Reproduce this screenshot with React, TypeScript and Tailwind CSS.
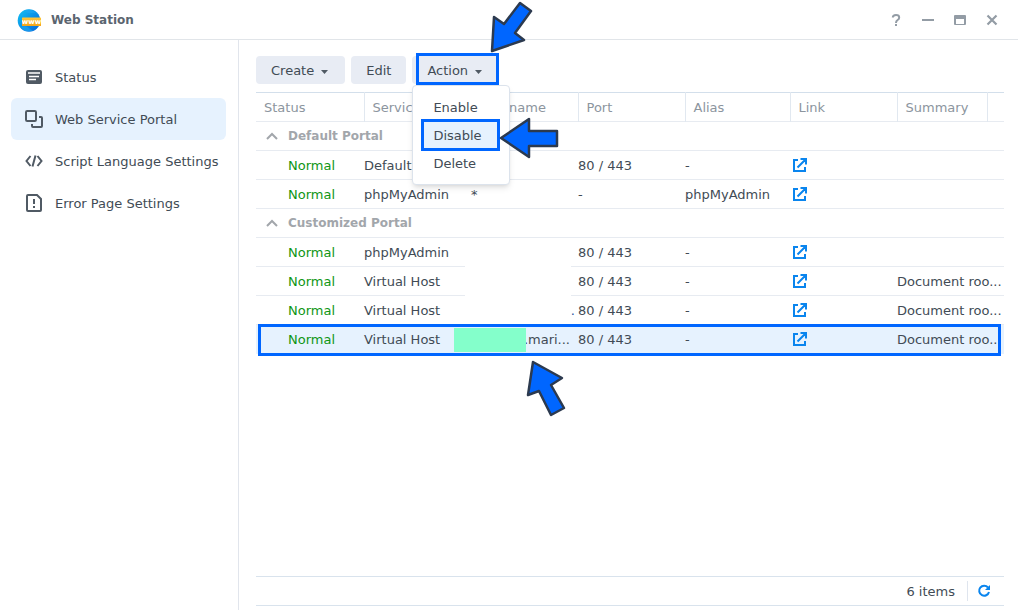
import React from "react";
import clsx from "clsx";

interface Portal {
  service: string;
  hostname?: string;
  port: string;
  alias: string;
  summary?: string;
  selected?: boolean;
}

interface PortalGroup {
  title: string;
  portals: Portal[];
}

const groups: PortalGroup[] = [
  {
    title: "Default Portal",
    portals: [
      { service: "Default", port: "80 / 443", alias: "-" },
      { service: "phpMyAdmin", hostname: "*", port: "-", alias: "phpMyAdmin" }
    ]
  },
  {
    title: "Customized Portal",
    portals: [
      { service: "phpMyAdmin", port: "80 / 443", alias: "-" },
      { service: "Virtual Host", port: "80 / 443", alias: "-", summary: "Document roo..." },
      { service: "Virtual Host", hostname: ".", port: "80 / 443", alias: "-", summary: "Document roo..." },
      { service: "Virtual Host", hostname: ".mari...", port: "80 / 443", alias: "-", summary: "Document roo...", selected: true }
    ]
  }
];

const headers = ["Status", "Service", "Hostname", "Port", "Alias", "Link", "Summary", ""];

function Logo() {
  return (
    <svg width="24" height="24" viewBox="0 0 24 24" className="shrink-0">
      <defs>
        <linearGradient id="globe" x1="0" y1="0" x2="1" y2="1">
          <stop offset="0" stopColor="#12c4f5" />
          <stop offset="1" stopColor="#0560d8" />
        </linearGradient>
        <linearGradient id="ribbon" x1="0" y1="0" x2="0" y2="1">
          <stop offset="0" stopColor="#fdc83c" />
          <stop offset="1" stopColor="#f6a31a" />
        </linearGradient>
      </defs>
      <circle cx="12" cy="12.5" r="11.3" fill="url(#globe)" />
      <path d="M7 2.8Q10 6 14 5T20 6Q16 2 12 1.6Q9 1.6 7 2.8M4 19Q9 17 12 20T17 22Q13 24 9 23Q6 22 4 19" fill="#22a8f4" opacity=".6" />
      <rect x="5" y="9.5" width="19" height="8.5" rx=".6" fill="url(#ribbon)" />
      <text x="14.5" y="16" textAnchor="middle" fontSize="7" fontWeight="bold" fontFamily="DejaVu Sans, sans-serif" fill="#fff">www</text>
    </svg>
  );
}

function StatusIcon() {
  return (
    <svg width="18" height="18" viewBox="0 0 18 18">
      <path d="M3 2h12a2 2 0 0 1 2 2v10a2 2 0 0 1-2 2H3a2 2 0 0 1-2-2V4a2 2 0 0 1 2-2Z" fill="#505a64" />
      <path d="M3 5h12M4 8.5h10M4 11.5h7" stroke="#fff" strokeWidth="1.4" />
    </svg>
  );
}

function PortalIcon() {
  return (
    <svg width="18" height="18" viewBox="0 0 18 18" fill="none" stroke="#505a64" strokeWidth="2">
      <rect x="1" y="1" width="10" height="10" rx="1.2" />
      <path d="M14 7h2q1 0 1 1v8q0 1-1 1H8q-1 0-1-1v-2" />
    </svg>
  );
}

function ScriptIcon() {
  return (
    <svg width="18" height="18" viewBox="0 0 18 18" fill="none" stroke="#505a64" strokeWidth="2">
      <path d="M5.5 4 1.5 9l4 5M12.5 4l4 5-4 5M10.5 3.5l-3 11" />
    </svg>
  );
}

function ErrorIcon() {
  return (
    <svg width="18" height="18" viewBox="0 0 18 18" fill="none" stroke="#505a64" strokeWidth="2">
      <path d="M3 1h9l4 4v11q0 1-1 1H3q-1 0-1-1V2q0-1 1-1Z" />
      <path d="M9 5v5M9 12v2" />
    </svg>
  );
}

function LinkIcon() {
  return (
    <svg width="16" height="16" viewBox="0 0 16 16" fill="none" stroke="#0a85ee" strokeWidth="2">
      <path d="M6 3H2v11h11v-4M5.5 10.5 13 3M8.5 2H14v5.5" />
    </svg>
  );
}

function Caret() {
  return (
    <svg width="7" height="4" viewBox="0 0 7 4" className="mt-px">
      <path d="M0 0h7L3.5 4Z" fill="#505a64" />
    </svg>
  );
}

const navItems = [
  { label: "Status", icon: <StatusIcon /> },
  { label: "Web Service Portal", icon: <PortalIcon />, active: true },
  { label: "Script Language Settings", icon: <ScriptIcon /> },
  { label: "Error Page Settings", icon: <ErrorIcon /> }
];

function TitleBar() {
  return (
    <header className="flex h-10 shrink-0 items-center border-b border-[#e1e5e9] pl-[17px] pr-[18px]">
      <Logo />
      <h1 className="ml-[10px] flex-1 text-xs font-bold text-[#5b656f]">Web Station</h1>
      <div className="flex items-center gap-4 text-[#939ca5]">
        <button type="button" aria-label="Help" className="size-4">
          <svg width="16" height="16" viewBox="0 0 16 16" fill="none" stroke="currentColor" strokeWidth="2">
            <path d="M4.8 5.6Q4.8 3 8 3t3.2 2.4Q11.2 7 9.6 8T8 11M8 12v2" />
          </svg>
        </button>
        <button type="button" aria-label="Minimize" className="size-4">
          <svg width="16" height="16" viewBox="0 0 16 16"><path d="M2 7h12v2H2Z" fill="currentColor" /></svg>
        </button>
        <button type="button" aria-label="Maximize" className="size-4">
          <svg width="16" height="16" viewBox="0 0 16 16">
            <path fillRule="evenodd" d="M3 3h10q1 0 1 1v8q0 1-1 1H3q-1 0-1-1V4q0-1 1-1Zm1 4v5h8V7Z" fill="currentColor" />
          </svg>
        </button>
        <button type="button" aria-label="Close" className="size-4">
          <svg width="16" height="16" viewBox="0 0 16 16"><path d="m3.5 3.5 9 9m0-9-9 9" stroke="currentColor" strokeWidth="2.2" /></svg>
        </button>
      </div>
    </header>
  );
}

function Sidebar() {
  return (
    <nav className="w-[239px] shrink-0 border-r border-[#e1e5ec] pl-[11px] pr-3 pt-4">
      {navItems.map((item) => (
        <a
          key={item.label}
          href="#"
          className={clsx(
            "flex h-[42px] items-center gap-3 whitespace-nowrap rounded-md pl-[14px]",
            item.active && "bg-[#e6f2fe]"
          )}
        >
          {item.icon}
          <span className="pt-0.5">{item.label}</span>
        </a>
      ))}
    </nav>
  );
}

function ActionMenu() {
  return (
    <div className="relative">
      <button type="button" aria-expanded="true" className="flex h-7 items-center gap-[7px] rounded-sm bg-[#e8ecf4] pl-[15px] pr-[17px] pt-0.5">
        Action
        <Caret />
      </button>
      <div className="pointer-events-none absolute -top-[3px] left-1 right-0 h-8 border-[3px] border-[#0066ff]" />
      <div role="menu" className="absolute left-0 top-[29px] z-10 w-[98px] rounded-sm border border-[#dce3ec] bg-white py-[7px] shadow-md">
        <button type="button" role="menuitem" className="block h-7 w-full pl-5 pt-0.5 text-left">Enable</button>
        <div className="relative">
          <button type="button" role="menuitem" className="ml-2 block h-7 w-[79px] bg-[#e6f2fe] pl-3 pt-0.5 text-left">Disable</button>
          <div className="pointer-events-none absolute -inset-y-[2px] left-2 w-[79px] border-[3px] border-[#0066ff]" />
        </div>
        <button type="button" role="menuitem" className="block h-7 w-full pl-5 pt-0.5 text-left">Delete</button>
      </div>
    </div>
  );
}

function PortalRow({ portal }: { portal: Portal }) {
  return (
    <tr className={clsx("relative h-[29px]", portal.selected ? "bg-[#e6f2fe]" : "border-b border-[#e7ebf1]")}>
      <td className="pl-8 pt-0.5 text-[#0f9615]">
        Normal
        {portal.selected && (
          <span className="pointer-events-none absolute -bottom-[2px] left-[2px] right-[3px] -top-px border-[3px] border-[#0066ff]" />
        )}
      </td>
      <td className="pt-0.5">{portal.service}</td>
      <td
        className={clsx(
          "pt-0.5",
          portal.selected && "pr-2 text-right",
          portal.hostname === "." && "pr-[3px] text-right text-[#2a55a0]"
        )}
      >
        {portal.hostname}
        {portal.selected && <span className="absolute left-[198px] top-[3px] h-6 w-[72px] bg-[#84ffcb]" />}
      </td>
      <td className="pt-0.5">{portal.port}</td>
      <td className="pt-0.5">{portal.alias}</td>
      <td>
        <a href="#" aria-label="Open portal" className="ml-0.5 block w-4"><LinkIcon /></a>
      </td>
      <td colSpan={2} className="whitespace-nowrap pt-0.5">{portal.summary}</td>
    </tr>
  );
}

function PortalTable() {
  return (
    <div className="relative">
      <table className="w-full table-fixed border-collapse border-t border-[#d3dfeb] text-left">
        <colgroup>
          <col className="w-[108px]" />
          <col className="w-[107px]" />
          <col className="w-[107px]" />
          <col className="w-[107px]" />
          <col className="w-[105px]" />
          <col className="w-[107px]" />
          <col className="w-[90px]" />
          <col />
        </colgroup>
        <thead>
          <tr className="h-[29px] border-b border-[#e7ebf1] text-[#8c959e]">
            {headers.map((header, i) => (
              <th key={i} scope="col" className={clsx("pl-2 pt-0.5 font-normal", i > 0 && "border-l border-[#e1e8f0]")}>
                {header}
              </th>
            ))}
          </tr>
        </thead>
        {groups.map((group) => (
          <tbody key={group.title}>
            <tr className="h-[29px] border-b border-[#e7ebf1]">
              <th colSpan={8} scope="rowgroup" className="text-[#a2a6ab]">
                <button type="button" className="flex items-center gap-[10px] pl-[10px] text-xs font-bold">
                  <svg width="12" height="8" viewBox="0 0 12 8" fill="none" stroke="currentColor" strokeWidth="2">
                    <path d="m1 7 5-5 5 5" />
                  </svg>
                  {group.title}
                </button>
              </th>
            </tr>
            {group.portals.map((portal, i) => (
              <PortalRow key={i} portal={portal} />
            ))}
          </tbody>
        ))}
      </table>
      {/* blanked-out host names */}
      <div className="absolute left-[209px] top-[147px] h-[84px] w-[106px] bg-white" />
    </div>
  );
}

function Arrow({ points }: { points: string }) {
  return <polygon points={points} fill="#0066ff" stroke="#2c3a4f" strokeWidth="2.5" strokeLinejoin="round" />;
}

export default function App() {
  return (
    <div className="relative flex h-screen flex-col overflow-hidden bg-white font-['DejaVu_Sans',Verdana,sans-serif] text-[13px] leading-5 text-[#414b55]">
      <TitleBar />
      <div className="flex min-h-0 flex-1">
        <Sidebar />
        <main className="flex min-w-0 flex-1 flex-col pb-1 pl-[17px] pr-[14px] pt-4">
          <div className="mb-2 flex gap-[6px]">
            <button type="button" className="flex h-7 items-center gap-[7px] rounded-sm bg-[#e8ecf4] pl-[15px] pr-[17px] pt-0.5">
              Create
              <Caret />
            </button>
            <button type="button" className="h-7 rounded-sm bg-[#e8ecf4] px-[15px] pt-0.5">Edit</button>
            <ActionMenu />
          </div>
          <div className="flex-1">
            <PortalTable />
          </div>
          <footer className="flex h-[30px] items-center justify-end border-y border-[#d9e3ed]">
            <span className="pr-3 pt-0.5">6 items</span>
            <span className="h-5 border-l border-[#dfe5ee]" />
            <button type="button" aria-label="Refresh" className="ml-2 mr-3">
              <svg width="16" height="16" viewBox="0 0 16 16" fill="none" stroke="#0a85ee" strokeWidth="2">
                <path d="M12 4.5A5 5 0 1 0 13 9" />
                <path d="M14 2v5H9Z" fill="#0a85ee" stroke="none" />
              </svg>
            </button>
          </footer>
        </main>
      </div>
      <svg width="120" height="440" viewBox="480 0 120 440" className="pointer-events-none absolute left-[480px] top-0 z-20">
        <Arrow points="492,51 494,17 504,24 520,3 531,11 515,33 524,40" />
        <Arrow points="501,138 529,119 529,131 557,131 557,146 529,146 529,157" />
        <Arrow points="533,362 562,378 551,385 564,408 551,415 539,391 528,395" />
      </svg>
    </div>
  );
}
